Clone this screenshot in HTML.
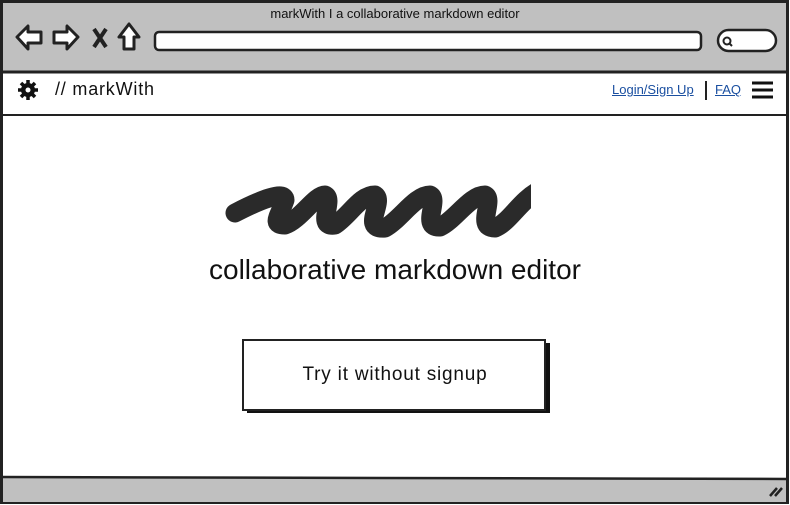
<!DOCTYPE html>
<html><head><meta charset="utf-8"><style>
html,body{margin:0;padding:0;width:790px;height:505px;overflow:hidden;background:#fff;font-family:"Liberation Sans",sans-serif;}
.abs{position:absolute}
</style></head><body>
<div class="abs" style="left:0;top:0;width:790px;height:505px;">
<svg class="abs" style="left:0;top:0" width="790" height="505">
 <rect x="1.5" y="1.5" width="786" height="501" fill="#fff" stroke="#222" stroke-width="3"/>
 <rect x="3" y="3" width="783" height="68" fill="#c0c0c0"/>
 <line x1="2" y1="72" x2="788" y2="72" stroke="#222" stroke-width="3"/>
 <line x1="2" y1="115" x2="788" y2="115" stroke="#222" stroke-width="2"/>
 <rect x="3" y="478" width="783" height="24" fill="#c0c0c0"/>
 <path d="M2 477 L788 479" stroke="#222" stroke-width="2.5"/>
 <path d="M17 37 L28 26 L28 32 L41 32 L41 43 L28 43 L28 49 Z" fill="#fff" stroke="#222" stroke-width="3" stroke-linejoin="round"/>
 <path d="M78 37 L67 26 L67 32 L54 32 L54 43 L67 43 L67 49 Z" fill="#fff" stroke="#222" stroke-width="3" stroke-linejoin="round"/>
 <path d="M94 29 L106 47 M106 29 L94 47" stroke="#222" stroke-width="4"/>
 <path d="M129 24 L119 37 L124 37 L124 49 L134 49 L134 37 L139 37 Z" fill="#fff" stroke="#222" stroke-width="3" stroke-linejoin="round"/>
 <rect x="155" y="32" width="546" height="18" rx="4" fill="#fff" stroke="#222" stroke-width="2.5"/>
 <rect x="718" y="30" width="58" height="21" rx="10.5" fill="#fff" stroke="#222" stroke-width="2.5"/>
 <circle cx="727" cy="41" r="3.5" fill="none" stroke="#222" stroke-width="2"/>
 <line x1="729" y1="43" x2="732" y2="46" stroke="#222" stroke-width="2"/>
 <g transform="translate(28,90)">
  <circle r="7" fill="#111"/>
  <g stroke="#111" stroke-width="3.5"><line x1="0" y1="-10" x2="0" y2="10"/><line x1="-10" y1="0" x2="10" y2="0"/><line x1="-7" y1="-7" x2="7" y2="7"/><line x1="-7" y1="7" x2="7" y2="-7"/></g>
  <circle r="2.5" fill="#fff"/>
 </g>
 <line x1="706" y1="81" x2="706" y2="100" stroke="#222" stroke-width="2"/>
 <g stroke="#111" stroke-width="3"><line x1="752" y1="83" x2="773" y2="83"/><line x1="752" y1="90" x2="773" y2="90"/><line x1="752" y1="97" x2="773" y2="97"/></g>
 <clipPath id="c"><rect x="220" y="180" width="311" height="70"/></clipPath>
 <path clip-path="url(#c)" d="M235 213 C260 200 285 190 285 200 C280 215 270 225 285 225 C300 220 315 195 325 195 C335 200 315 228 335 225 C350 215 360 195 375 195 C385 202 360 230 385 228 C400 220 415 195 430 195 C440 200 420 228 440 227 C455 220 470 195 485 195 C495 200 475 228 495 228 C510 222 520 200 540 190" fill="none" stroke="#2a2a2a" stroke-width="19" stroke-linecap="round" stroke-linejoin="round"/>
 <rect x="247" y="343" width="303" height="70" fill="#111"/>
 <rect x="243" y="340" width="302" height="70" fill="#fff" stroke="#222" stroke-width="2"/>
 <path d="M770 496 L777 488 M775 496 L782 488" stroke="#222" stroke-width="2.5"/>
</svg>
<div class="abs" style="left:0;width:790px;top:6px;text-align:center;font-size:13px;color:#111;">markWith I a collaborative markdown editor</div>
<div class="abs" style="left:55px;top:79px;font-size:18px;color:#111;letter-spacing:0.8px;">// markWith</div>
<div class="abs" style="left:612px;top:82px;font-size:13px;color:#1a4fa0;text-decoration:underline;">Login/Sign Up</div>
<div class="abs" style="left:715px;top:82px;font-size:13px;color:#1a4fa0;text-decoration:underline;">FAQ</div>
<div class="abs" style="left:0;width:790px;top:254px;text-align:center;font-size:28px;color:#111;">collaborative markdown editor</div>
<div class="abs" style="left:243px;width:304px;top:364px;text-align:center;font-size:19px;color:#111;letter-spacing:0.8px;">Try it without signup</div>
</div>
</body></html>
